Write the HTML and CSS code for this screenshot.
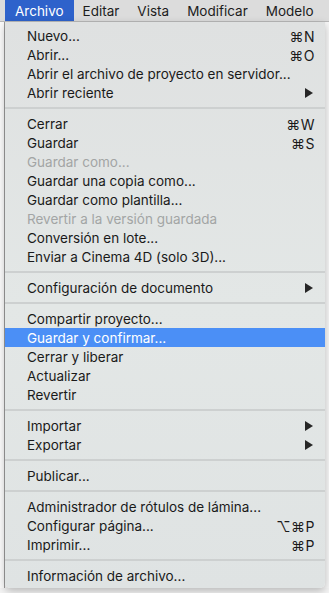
FILE: index.html
```html
<!DOCTYPE html>
<html lang="es">
<head>
    <meta charset="UTF-8">
    <meta name="viewport" content="width=device-width, initial-scale=1.0">
    <title>Archivo</title>
    <link rel="stylesheet" href="styles.css">
</head>
<body>
    <div class="desk">
        <nav class="menubar">
            <span class="menubar-item active">Archivo</span>
            <span class="menubar-item">Editar</span>
            <span class="menubar-item">Vista</span>
            <span class="menubar-item">Modificar</span>
            <span class="menubar-item">Modelo</span>
        </nav>

        <div class="stage">
            <div class="ruler-left"></div>
            <ul class="menu">
                <li class="item"><span>Nuevo...</span><span class="key">⌘N</span></li>
                <li class="item"><span>Abrir...</span><span class="key">⌘O</span></li>
                <li class="item"><span>Abrir el archivo de proyecto en servidor...</span></li>
                <li class="item"><span>Abrir reciente</span><span class="arrow"></span></li>
                <li class="sep"></li>
                <li class="item"><span>Cerrar</span><span class="key">⌘W</span></li>
                <li class="item"><span>Guardar</span><span class="key">⌘S</span></li>
                <li class="item disabled"><span>Guardar como...</span></li>
                <li class="item"><span>Guardar una copia como...</span></li>
                <li class="item"><span>Guardar como plantilla...</span></li>
                <li class="item disabled"><span>Revertir a la versión guardada</span></li>
                <li class="item"><span>Conversión en lote...</span></li>
                <li class="item"><span>Enviar a Cinema 4D (solo 3D)...</span></li>
                <li class="sep"></li>
                <li class="item"><span>Configuración de documento</span><span class="arrow"></span></li>
                <li class="sep"></li>
                <li class="item"><span>Compartir proyecto...</span></li>
                <li class="item selected"><span>Guardar y confirmar...</span></li>
                <li class="item"><span>Cerrar y liberar</span></li>
                <li class="item"><span>Actualizar</span></li>
                <li class="item"><span>Revertir</span></li>
                <li class="sep"></li>
                <li class="item"><span>Importar</span><span class="arrow"></span></li>
                <li class="item"><span>Exportar</span><span class="arrow"></span></li>
                <li class="sep"></li>
                <li class="item"><span>Publicar...</span></li>
                <li class="sep"></li>
                <li class="item"><span>Administrador de rótulos de lámina...</span></li>
                <li class="item"><span>Configurar página...</span><span class="key">⌥⌘P</span></li>
                <li class="item"><span>Imprimir...</span><span class="key">⌘P</span></li>
                <li class="sep"></li>
                <li class="item"><span>Información de archivo...</span></li>
            </ul>
        </div>
    </div>
</body>
</html>
```

FILE: styles.css
```css
body{
    margin: 0;
    padding: 0;
    background-color: #f4f4f4;
    font-family: Inter, "Noto Sans", sans-serif;
}
.desk{
    width: 329px;
    height: 593px;
    overflow: hidden;
}
.menubar{
    display: flex;
    height: 21px;
    padding-left: 5px;
    background-color: #dcdcdc;
    border-bottom: 1px solid #b9b9b9;
}
.menubar-item{
    padding: 0 9px;
    font-size: 13.5px;
    line-height: 22px;
    color: #1c1c1c;
}
.menubar-item.active{
    padding: 0 10px;
    background-color: #2e62cb;
    color: #fff;
}
.stage{
    display: flex;
    background-color: #f7f7f7;
}
.ruler-left{
    width: 4px;
    border-right: 1px solid #9c9c9c;
    background-color: #fbfbfb;
}
.menu{
    list-style: none;
    margin: 0;
    padding: 4px 0 3px;
    width: 320px;
    background: linear-gradient(#dfe1e1, #e3e7e6 50%, #dfe3e3);
    border-radius: 0 0 5px 5px;
    box-shadow: 0 3px 8px rgba(0,0,0,0.25);
}
.item{
    display: flex;
    justify-content: space-between;
    align-items: center;
    height: 19px;
    padding: 1px 10px 0 22px;
    box-sizing: border-box;
    font-size: 13.5px;
    color: #1a1a1a;
}
.item.disabled{
    color: #a3a5a5;
}
.item.selected{
    background-color: #4b8ff6;
    color: #fff;
}
.key{
    font-size: 14px;
    letter-spacing: 0.5px;
}
.arrow{
    width: 0;
    height: 0;
    margin-right: 2px;
    border-top: 5px solid transparent;
    border-bottom: 5px solid transparent;
    border-left: 8px solid #262626;
}
.sep{
    height: 2px;
    margin: 5px 0;
    background-color: #cdd0d0;
}
```
